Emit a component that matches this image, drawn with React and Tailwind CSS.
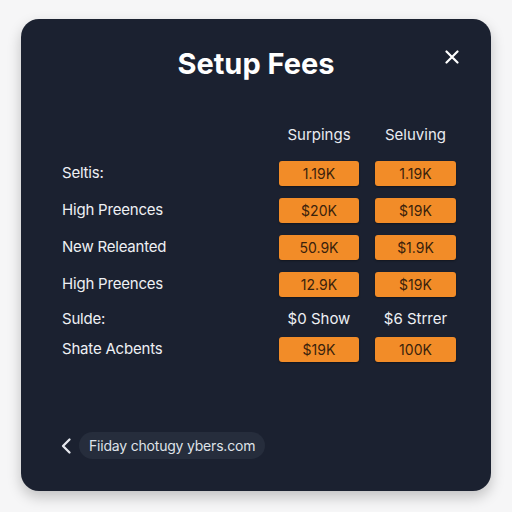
import React from "react";

const rows = [
  { label: "Seltis:", a: "1.19K", b: "1.19K", boxed: true, mt: "mt-[16px]" },
  { label: "High Preences", a: "$20K", b: "$19K", boxed: true, mt: "mt-[12px]" },
  { label: "New Releanted", a: "50.9K", b: "$1.9K", boxed: true, mt: "mt-[12px]" },
  { label: "High Preences", a: "12.9K", b: "$19K", boxed: true, mt: "mt-[12px]" },
  { label: "Sulde:", a: "$0 Show", b: "$6 Strrer", boxed: false, mt: "mt-[10px]" },
  { label: "Shate Acbents", a: "$19K", b: "100K", boxed: true, mt: "mt-[5px]" },
];

function Cell({ value, boxed }) {
  if (!boxed) {
    return (
      <div className="h-[25px] flex items-center justify-center text-[15px] text-[#eef0f4]">
        {value}
      </div>
    );
  }
  return (
    <div className="h-[25px] rounded-[3px] bg-[#f28c28] flex items-center justify-center text-[14px] text-[#3a220c] shadow-[0_1px_2px_rgba(0,0,0,0.35)]">
      {value}
    </div>
  );
}

export default function App() {
  return (
    <div
      className="w-[512px] h-[512px] bg-[#f6f6f7] pt-[19px] pl-[21px]"
      style={{ fontFamily: "Inter, 'Noto Sans', sans-serif" }}
    >
      <div className="relative w-[470px] h-[472px] rounded-[18px] bg-[#1b2130] shadow-[0_6px_14px_rgba(0,0,0,0.22)] flex flex-col">
        <h1 className="mt-[27px] h-[36px] leading-[36px] text-center text-[29px] font-bold text-white tracking-[0px]">
          Setup Fees
        </h1>
        <button className="absolute right-[31px] top-[30px] w-[16px] h-[16px] flex items-center justify-center">
          <svg width="14" height="14" viewBox="0 0 14 14" fill="none" stroke="#ffffff" strokeWidth="2.2" strokeLinecap="round">
            <path d="M1.5 1.5L12.5 12.5M12.5 1.5L1.5 12.5" />
          </svg>
        </button>

        <div className="pl-[41px] pr-[35px]">
          <div className="mt-[43px] grid grid-cols-[1fr_80px_81px] gap-x-[16px] h-[20px] leading-[20px] text-[15px] text-[#e9ebf0]">
            <div />
            <div className="text-center">Surpings</div>
            <div className="text-center">Seluving</div>
          </div>

          {rows.map((r, i) => (
            <div
              key={i}
              className={`${r.mt} grid grid-cols-[1fr_80px_81px] gap-x-[16px] items-center`}
            >
              <div className="text-[15px] text-[#eef0f4] tracking-[-0.2px]">{r.label}</div>
              <Cell value={r.a} boxed={r.boxed} />
              <Cell value={r.b} boxed={r.boxed} />
            </div>
          ))}
        </div>

        <div className="mt-auto mb-[32px] ml-[39px] flex items-center gap-[6px]">
          <svg width="13" height="18" viewBox="0 0 13 18" fill="none" stroke="#e6e8ee" strokeWidth="2.3" strokeLinecap="round" strokeLinejoin="round">
            <path d="M9.5 2.5L3 9l6.5 6.5" />
          </svg>
          <div className="h-[27px] rounded-full bg-[#262d3c] px-[10px] flex items-center text-[14px] text-[#dfe2e8] tracking-[-0.2px]">
            Fiiday chotugy ybers.com
          </div>
        </div>
      </div>
    </div>
  );
}
